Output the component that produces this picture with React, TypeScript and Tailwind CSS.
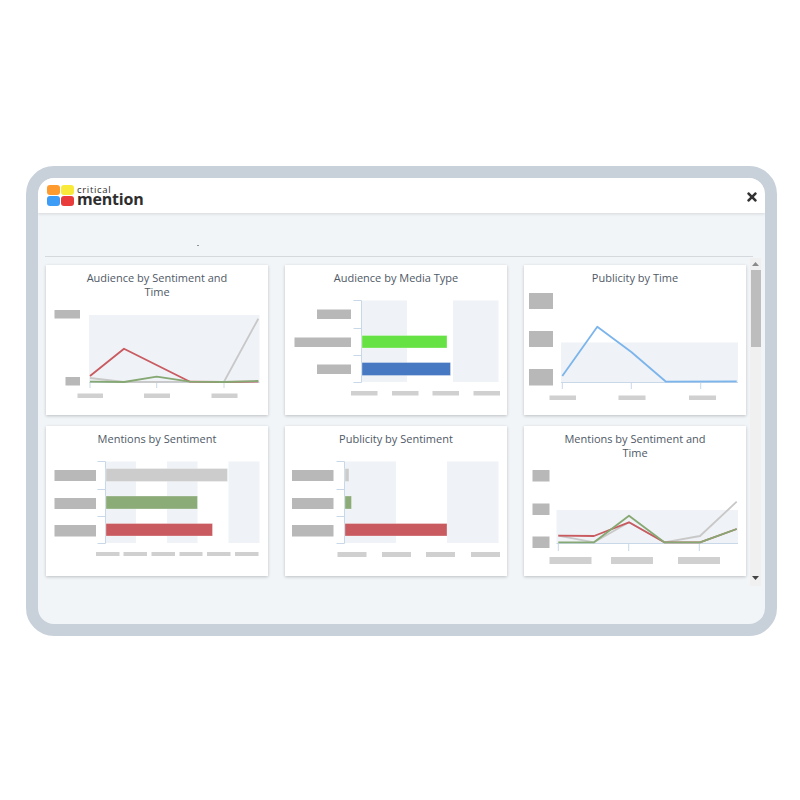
import type { ReactNode } from "react"
import { FaTimes } from "react-icons/fa"

type Rect = [number, number, number, number]

const LABEL = "#b8b8b8"
const TICK_LABEL = "#d0d0d0"
const BAND = "#eff2f6"
const AXIS = "#c9d8e8"

// shapes use page coordinates, each card's viewBox maps them back into the card
function Card({
  title,
  x,
  y,
  twoLines,
  children,
}: {
  title: string
  x: number
  y: number
  twoLines?: boolean
  children: ReactNode
}) {
  const titleH = twoLines ? 34 : 20
  return (
    <div className="flex h-[150px] w-[222px] flex-col bg-white shadow-[0_1px_3px_rgba(0,0,0,0.22)]">
      <div className="px-[30px] pt-[6px] text-center text-[11px] leading-[14px] text-[#4f5966]">
        {title}
      </div>
      <svg
        width={222}
        height={150 - titleH}
        viewBox={`${x} ${y + titleH} 222 ${150 - titleH}`}
        className="block"
      >
        {children}
      </svg>
    </div>
  )
}

function Rects({ items, fill }: { items: Rect[]; fill: string }) {
  return (
    <>
      {items.map(([x1, y1, x2, y2]) => (
        <rect key={`${x1}-${y1}`} x={x1} y={y1} width={x2 - x1} height={y2 - y1} fill={fill} />
      ))}
    </>
  )
}

function Line({ points, color }: { points: string; color: string }) {
  return <polyline points={points} fill="none" stroke={color} strokeWidth={1.8} strokeLinejoin="round" />
}

function Bar({ rect, fill }: { rect: Rect; fill: string }) {
  const [x1, y1, x2, y2] = rect
  return <rect x={x1} y={y1} width={x2 - x1} height={y2 - y1} fill={fill} stroke="#ffffff" strokeOpacity={0.5} strokeWidth={0.6} />
}

function Bracket({ x, left, ys }: { x: number; left: number; ys: number[] }) {
  return (
    <g stroke={AXIS} strokeWidth={1} fill="none">
      <line x1={x} x2={x} y1={ys[0]} y2={ys[ys.length - 1]} />
      {ys.map((y) => (
        <line key={y} x1={left} x2={x} y1={y} y2={y} />
      ))}
    </g>
  )
}

function BottomAxis({ x1, x2, y, ticks, end }: { x1: number; x2: number; y: number; ticks: number[]; end: number }) {
  return (
    <g stroke={AXIS} strokeWidth={1}>
      <line x1={x1} x2={x2} y1={y} y2={y} />
      {ticks.map((t) => (
        <line key={t} x1={t} x2={t} y1={y} y2={end} />
      ))}
    </g>
  )
}

function Logo() {
  return (
    <div className="flex items-center gap-[3px]">
      <div className="grid grid-cols-[13px_13px] grid-rows-[10px_10px] gap-x-px gap-y-px">
        <div className="rounded-[3px] bg-[#fe9a2e]" />
        <div className="rounded-[3px] bg-[#f9ea3a]" />
        <div className="rounded-[3px] bg-[#3d9cf5]" />
        <div className="rounded-[3px] bg-[#ea3b3b]" />
      </div>
      <div className="flex flex-col text-[#2e2e2e]">
        <span className="mt-[2px] h-[6px] text-[9.5px] leading-[6px] tracking-[0.7px]">critical</span>
        <span className="h-[13px] text-[16px] leading-[13px] font-bold tracking-[-0.2px]">mention</span>
      </div>
    </div>
  )
}

function Scrollbar() {
  return (
    <div className="mt-px flex h-[328px] w-[11px] flex-col items-center bg-[#f0f0f0]">
      <svg width={7} height={4} viewBox="0 0 7 4" className="mt-[4px]">
        <path d="M3.5 0 7 4H0z" fill="#8a8a8a" />
      </svg>
      <div className="mt-[4px] h-[77px] w-[10px] bg-[#bdbdbd]" />
      <svg width={7} height={4} viewBox="0 0 7 4" className="mt-[229px]">
        <path d="M0 0h7L3.5 4z" fill="#444" />
      </svg>
    </div>
  )
}

export default function App() {
  return (
    <div
      className="h-[800px] w-[800px] bg-white pt-[166px] pl-[26px]"
      style={{ fontFamily: '"Open Sans", "Noto Sans", sans-serif' }}
    >
      <div className="h-[470px] w-[751px] overflow-hidden rounded-[28px] border-[12px] border-[#c8d1da] bg-[#f2f5f8]">
        {/* Header */}
        <div className="flex h-[35px] items-center justify-between bg-white pr-[6px] pl-[9px] shadow-[0_1px_3px_rgba(0,0,0,0.12)]">
          <Logo />
          <FaTimes className="mt-[3px] h-[14px] w-[14px] text-[#333333]" />
        </div>

        <div className="pl-[7px]">
          {/* Toolbar */}
          <div className="relative h-[44px] w-[708px] border-b border-[#d5d9dd]">
            <div className="absolute top-[32px] left-[152px] h-px w-[2px] bg-[#8a93a0]" />
          </div>

          <div className="flex items-start gap-[4px]">
            <div className="grid grid-cols-[222px_222px_222px] gap-x-[17px] gap-y-[11px] pt-[8px] pl-px">
              <Card title="Audience by Sentiment and Time" x={46} y={265} twoLines>
                <Rects fill={BAND} items={[[89, 315, 259.5, 382.5]]} />
                <BottomAxis x1={89} x2={259.5} y={382.5} ticks={[90, 156.7, 224]} end={388} />
                <Rects fill={LABEL} items={[[54.5, 310, 80, 318.5], [65.5, 377, 80, 385.5]]} />
                <Rects fill={TICK_LABEL} items={[[77.5, 393.5, 103, 398], [144, 393.5, 170, 398], [211.5, 393.5, 237.5, 398]]} />
                <Line color="#c8c8c8" points="90,378 124,382 224,381.7 258.3,318.7" />
                <Line color="#c95a60" points="90,376 124,348.7 190,381.7 224,382 258.3,381.5" />
                <Line color="#86a873" points="90,381.7 124,382 156.7,376.7 190,381.7 224,382 258.3,381" />
              </Card>

              <Card title="Audience by Media Type" x={285} y={265}>
                <Rects fill={BAND} items={[[362, 300.5, 407, 382], [453, 300.5, 498.5, 382]]} />
                <Bracket x={361.5} left={353.5} ys={[300.5, 328.5, 355.5, 382.5]} />
                <Rects fill={LABEL} items={[[317, 309.5, 351, 319], [294.5, 337.5, 351, 347], [317, 364.5, 351, 374]]} />
                <Rects fill={TICK_LABEL} items={[[351, 391, 377.5, 395.5], [392, 391, 418.5, 395.5], [432.5, 391, 459, 395.5], [473.5, 391, 500, 395.5]]} />
                <Bar rect={[362, 335.5, 447, 348]} fill="#66e244" />
                <Bar rect={[362, 362.5, 450.5, 375.5]} fill="#4679c2" />
              </Card>

              <Card title="Publicity by Time" x={524} y={265}>
                <Rects fill={BAND} items={[[561, 342.5, 738, 382.5]]} />
                <BottomAxis x1={561} x2={738} y={382.5} ticks={[562.3, 631.3, 700.7]} end={389} />
                <Rects fill={LABEL} items={[[529, 293, 553, 309], [529, 331, 553, 347], [529, 369, 553, 385.5]]} />
                <Rects fill={TICK_LABEL} items={[[549.5, 395.5, 576, 400], [618.5, 395.5, 645.5, 400], [689, 395.5, 716, 400]]} />
                <Line color="#7cb5ec" points="562.3,376 597.3,326.7 631.3,352 666,381.7 736.7,381.3" />
              </Card>

              <Card title="Mentions by Sentiment" x={46} y={426}>
                <Rects fill={BAND} items={[[106, 461.5, 136, 543], [167, 461.5, 197.5, 543], [228.5, 461.5, 259.5, 543]]} />
                <Bracket x={105.5} left={97.5} ys={[461.5, 489.5, 516.5, 543.5]} />
                <Rects fill={LABEL} items={[[54.5, 470, 96, 481], [54.5, 498, 96, 509], [54.5, 525, 96, 536.5]]} />
                <Rects fill={TICK_LABEL} items={[[96, 552, 119.5, 556], [123.5, 552, 147, 556], [151.5, 552, 175, 556], [179.5, 552, 202.5, 556], [207, 552, 230.5, 556], [235, 552, 258.5, 556]]} />
                <Bar rect={[106, 468.5, 227.5, 481.5]} fill="#cccccc" />
                <Bar rect={[106, 496, 197.5, 509]} fill="#8bab77" />
                <Bar rect={[106, 523.5, 212.5, 536]} fill="#c95a60" />
              </Card>

              <Card title="Publicity by Sentiment" x={285} y={426}>
                <Rects fill={BAND} items={[[345, 461.5, 396, 543], [447, 461.5, 498.5, 543]]} />
                <Bracket x={344.5} left={336.5} ys={[461.5, 489.5, 516.5, 543.5]} />
                <Rects fill={LABEL} items={[[292, 470, 333.5, 481], [292, 498, 333.5, 509], [292, 525, 333.5, 536.5]]} />
                <Rects fill={TICK_LABEL} items={[[337.5, 552, 366.5, 557], [382, 552, 411, 557], [426, 552, 455, 557], [471, 552, 500, 557]]} />
                <Bar rect={[345, 468.5, 349, 481.5]} fill="#cccccc" />
                <Bar rect={[345, 496, 351.5, 509]} fill="#8bab77" />
                <Bar rect={[345, 523.5, 447, 536]} fill="#c95a60" />
              </Card>

              <Card title="Mentions by Sentiment and Time" x={524} y={426} twoLines>
                <Rects fill={BAND} items={[[556.5, 510, 738, 543.5]]} />
                <BottomAxis x1={556.5} x2={738} y={543.5} ticks={[558.3, 628.7, 699.3]} end={551} />
                <Rects fill={LABEL} items={[[532.5, 470, 549.5, 481.5], [532.5, 503.5, 549.5, 515], [532.5, 536.5, 549.5, 548]]} />
                <Rects fill={TICK_LABEL} items={[[549.5, 557, 591.5, 564], [611, 557, 653, 564], [678, 557, 720, 564]]} />
                <Line color="#c8c8c8" points="558.3,535.7 594,542.3 629,522.3 664.3,542.3 700,536 736.7,501.7" />
                <Line color="#c95a60" points="558.3,535.7 594,536 629,522.3 664.3,542.3 700,542.3 736.7,529" />
                <Line color="#86a873" points="558.3,542.3 594,542.3 629,515.7 664.3,542.3 700,542.3 736.7,529" />
              </Card>
            </div>
            <Scrollbar />
          </div>
        </div>
      </div>
    </div>
  )
}
